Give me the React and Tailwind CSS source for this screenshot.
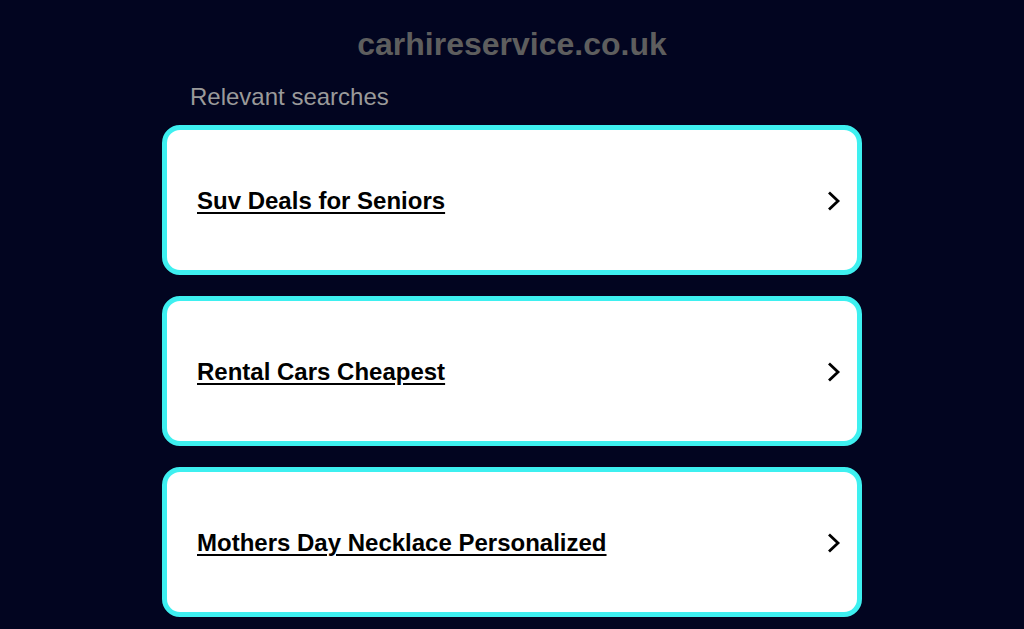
import React from "react";

const searches = [
  "Suv Deals for Seniors",
  "Rental Cars Cheapest",
  "Mothers Day Necklace Personalized",
];

function Chevron() {
  return (
    <svg width="14" height="20" viewBox="0 0 14 20" fill="none" className="shrink-0">
      <path d="M2 1.5 L11 10 L2 18.5" stroke="#000" strokeWidth="2.8" />
    </svg>
  );
}

export default function App() {
  return (
    <div
      className="min-h-screen bg-[#020520] flex flex-col items-center"
      style={{ fontFamily: '"Liberation Sans", Arial, sans-serif' }}
    >
      <h1 className="mt-[25px] text-[32px] leading-[38px] font-bold text-[#5e5e5e]">
        carhireservice.co.uk
      </h1>
      <div className="w-[700px] mt-[19px]">
        <p className="pl-[28px] text-[24px] leading-[30px] text-[#9a9a9a]">
          Relevant searches
        </p>
        <div className="mt-[13px] flex flex-col gap-[21px]">
          {searches.map((s) => (
            <a
              key={s}
              href="#"
              className="h-[150px] flex items-center justify-between bg-white border-[5px] border-[#3ef0f0] rounded-[18px] pl-[30px] pr-[16px] pt-[2px]"
            >
              <span className="text-[24px] font-bold text-black underline underline-offset-[3px] decoration-2">
                {s}
              </span>
              <Chevron />
            </a>
          ))}
        </div>
      </div>
    </div>
  );
}
